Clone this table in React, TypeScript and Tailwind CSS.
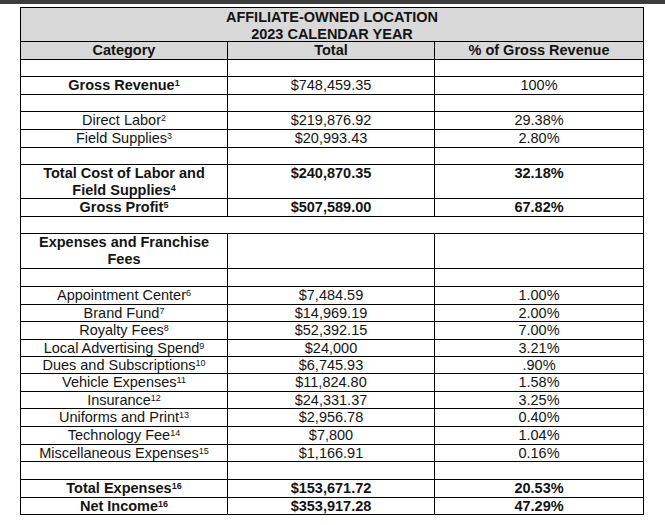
import type { ReactNode } from "react";

type Row = {
  h: number;
  cells?: [ReactNode, ReactNode, ReactNode];
  bold?: boolean;
};

const S = ({ n }: { n: string }) => <sup className="text-[9px]">{n}</sup>;

const rows: Row[] = [
  { h: 17 },
  { h: 18, cells: [<b>Gross Revenue<S n="1" /></b>, "$748,459.35", "100%"] },
  { h: 17 },
  { h: 18, cells: [<>Direct Labor<S n="2" /></>, "$219,876.92", "29.38%"] },
  { h: 18, cells: [<>Field Supplies<S n="3" /></>, "$20,993.43", "2.80%"] },
  { h: 17 },
  {
    h: 34,
    bold: true,
    cells: [
      <>
        Total Cost of Labor and
        <br />
        Field Supplies<S n="4" />
      </>,
      "$240,870.35",
      "32.18%",
    ],
  },
  { h: 18, bold: true, cells: [<>Gross Profit<S n="5" /></>, "$507,589.00", "67.82%"] },
];

const expenses: [string, string, string, string][] = [
  ["Appointment Center", "6", "$7,484.59", "1.00%"],
  ["Brand Fund", "7", "$14,969.19", "2.00%"],
  ["Royalty Fees", "8", "$52,392.15", "7.00%"],
  ["Local Advertising Spend", "9", "$24,000", "3.21%"],
  ["Dues and Subscriptions", "10", "$6,745.93", ".90%"],
  ["Vehicle Expenses", "11", "$11,824.80", "1.58%"],
  ["Insurance", "12", "$24,331.37", "3.25%"],
  ["Uniforms and Print", "13", "$2,956.78", "0.40%"],
  ["Technology Fee", "14", "$7,800", "1.04%"],
  ["Miscellaneous Expenses", "15", "$1,166.91", "0.16%"],
];
const expH = [18, 17, 18, 17, 17, 18, 17, 18, 18, 17];

const lower: Row[] = [
  { h: 35, bold: true, cells: [<>Expenses and Franchise<br />Fees</>, "", ""] },
  { h: 18 },
  ...expenses.map(([name, n, total, pct], i) => ({
    h: expH[i],
    cells: [<>{name}<S n={n} /></>, total, pct] as [ReactNode, ReactNode, ReactNode],
  })),
  { h: 18 },
  { h: 18, bold: true, cells: [<>Total Expenses<S n="16" /></>, "$153,671.72", "20.53%"] },
  { h: 16, bold: true, cells: [<>Net Income<S n="16" /></>, "$353,917.28", "47.29%"] },
];

function TableRow({ row, last }: { row: Row; last?: boolean }) {
  const base = `grid grid-cols-[207px_207px_1fr] ${last ? "" : "border-b border-black"} ${row.bold ? "font-bold" : ""}`;
  return (
    <div className={base} style={{ height: row.h }}>
      {row.cells ? (
        row.cells.map((c, i) => (
          <div key={i} className={`text-center whitespace-nowrap ${i < 2 ? "border-r border-black" : ""}`}>
            {c}
          </div>
        ))
      ) : (
        <>
          <div className="border-r border-black" />
          <div className="border-r border-black" />
          <div />
        </>
      )}
    </div>
  );
}

export default function App() {
  return (
    <div className="w-[665px] h-[525px] bg-white text-[#141414] text-[14.5px] leading-[17px] font-['Liberation_Sans',Arial,sans-serif] overflow-hidden">
      <div className="h-[4px] bg-[#3d3d3d]" />
      <div className="ml-[20px] mt-[3px] w-[624px] border border-black">
        <div className="bg-[#d9d9d9] font-bold">
          <div className="h-[34px] border-b border-black text-center pt-[1px]">
            AFFILIATE-OWNED LOCATION
            <br />
            2023 CALENDAR YEAR
          </div>
          <div className="h-[18px] border-b border-black grid grid-cols-[207px_207px_1fr] text-center">
            <div className="border-r border-black">Category</div>
            <div className="border-r border-black">Total</div>
            <div>% of Gross Revenue</div>
          </div>
        </div>
        {rows.map((r, i) => (
          <TableRow key={i} row={r} />
        ))}
        <div className="h-[17px] border-b border-black" />
        {lower.map((r, i) => (
          <TableRow key={i} row={r} last={i === lower.length - 1} />
        ))}
      </div>
    </div>
  );
}
